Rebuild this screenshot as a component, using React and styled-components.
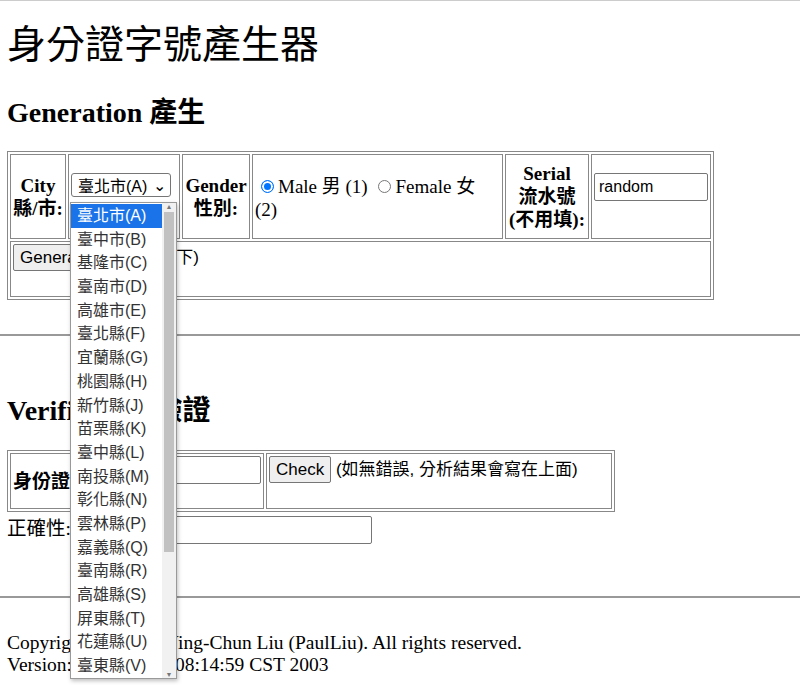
import React from "react";
import styled, { createGlobalStyle } from "styled-components";

const Global = createGlobalStyle`
  body { margin: 0; background: #fff; font-family: "Liberation Serif", "Noto Sans CJK TC", serif; font-size: 18px; color: #000; }
`;

const Page = styled.div`
  position: relative;
  border-top: 1px solid #ccc;
  padding: 0 0 0 7px;
  height: 684px;
  overflow: hidden;
`;
const Title = styled.h1`
  margin: 16px 0 0;
  font-family: "Noto Sans CJK TC", sans-serif;
  font-weight: 400;
  font-size: 39px;
  line-height: 48px;
`;
const H2 = styled.h2`
  margin: ${p => p.$top}px 0 0;
  font-size: 28px;
  line-height: 34px;
  font-family: "Liberation Serif", "Noto Sans CJK TC", serif;
`;
const Table = styled.table`
  margin-top: ${p => p.$top}px;
  border: 1px solid #888;
  border-spacing: 2px;
  width: ${p => p.$w}px;
`;
const Td = styled.td`
  border: 1px solid #888;
  padding: ${p => p.$pad || "2px"};
  vertical-align: ${p => p.$v || "middle"};
  text-align: ${p => p.$c ? "center" : "left"};
  font-weight: ${p => p.$b ? 700 : 400};
  width: ${p => p.$w ? p.$w + "px" : "auto"};
  height: ${p => p.$h ? p.$h + "px" : "auto"};
  line-height: 23px;
  font-family: ${p => p.$sans ? '"Liberation Sans", "Noto Sans CJK TC", sans-serif' : 'inherit'};
  font-size: ${p => p.$sans ? "17px" : "19px"};
`;
const FakeSelect = styled.div`
  display: inline-flex;
  align-items: center;
  gap: 6px;
  border: 1px solid #767676;
  border-radius: 3px;
  padding: 0 4px 0 6px;
  height: 22px;
  font: 16px "Liberation Sans", "Noto Sans CJK TC", sans-serif;
`;
const Radio = styled.span`
  display: inline-block;
  width: 11px;
  height: 11px;
  border-radius: 50%;
  border: 1px solid ${p => p.$on ? "#0075ff" : "#777"};
  box-shadow: ${p => p.$on ? "inset 0 0 0 2px #fff" : "none"};
  background: ${p => p.$on ? "#0075ff" : "#fff"};
  margin: 0 4px 0 6px;
`;
const Input = styled.input`
  width: ${p => p.$w}px;
  height: 24px;
  border: 1px solid #767676;
  border-radius: 2px;
  padding: 1px 4px;
  font: 16px "Liberation Sans", sans-serif;
  margin-left: ${p => p.$ml || 0}px;
`;
const Button = styled.button`
  font: 17px "Liberation Sans", "Noto Sans CJK TC", sans-serif;
  background: #efefef;
  border: 1px solid #767676;
  border-radius: 2px;
  padding: 2px 6px;
  height: 27px;
`;
const Hr = styled.hr`
  margin: ${p => p.$top}px 0 0 -7px;
  border: 0;
  border-top: 2px solid #999;
`;
const Line = styled.div`
  line-height: 22px;
  font-family: "Liberation Serif", "Noto Sans CJK TC", serif;
  font-size: ${p => p.$s || 19.5}px;
  margin-top: ${p => p.$top || 0}px;
`;
const Dropdown = styled.div`
  position: absolute;
  left: 70px;
  top: 201px;
  width: 105px;
  height: 475px;
  background: #fff;
  border: 1px solid #999;
  box-shadow: 1px 2px 4px rgba(0,0,0,0.25);
  display: flex;
  font: 16px "Liberation Sans", "Noto Sans CJK TC", sans-serif;
`;
const Options = styled.div` flex: 1; padding-top: 1px; `;
const Opt = styled.div`
  height: 23.7px;
  line-height: 23.7px;
  padding-left: 6px;
  background: ${p => p.$sel ? "#1a73e8" : "transparent"};
  color: ${p => p.$sel ? "#fff" : "#333"};
`;
const Scroll = styled.div`
  width: 14px;
  display: flex;
  flex-direction: column;
  align-items: center;
  background: #f1f1f1;
  font-size: 7px;
  color: #777;
`;
const Thumb = styled.div`
  width: 10px;
  height: 340px;
  background: #c1c1c1;
  margin: 2px 0;
`;

const cities = ["臺北市(A)","臺中市(B)","基隆市(C)","臺南市(D)","高雄市(E)","臺北縣(F)","宜蘭縣(G)","桃園縣(H)","新竹縣(J)","苗栗縣(K)","臺中縣(L)","南投縣(M)","彰化縣(N)","雲林縣(P)","嘉義縣(Q)","臺南縣(R)","高雄縣(S)","屏東縣(T)","花蓮縣(U)","臺東縣(V)"];

export default function App() {
  return (
    <Page>
      <Global />
      <Title>身分證字號產生器</Title>
      <H2 $top={31}>Generation 產生</H2>
      <Table $top={21} $w={707}>
        <tbody>
          <tr>
            <Td $b $c $w={50} $h={79}>City<br />縣/市:</Td>
            <Td $w={106} $v="top" $pad="18px 2px 2px">
              <FakeSelect>臺北市(A) <span>⌄</span></FakeSelect>
            </Td>
            <Td $b $c $w={62}>Gender<br />性別:</Td>
            <Td $v="top" $pad="20px 2px 2px">
              <Radio $on />Male 男 (1) <Radio />Female 女 (2)
            </Td>
            <Td $b $c $w={78}>Serial<br />流水號<br />(不用填):</Td>
            <Td $v="top" $w={104} $pad="18px 2px 2px"><Input $w={104} defaultValue="random" /></Td>
          </tr>
          <tr>
            <Td colSpan={6} $v="top" $h={50} $sans><Button>Generate</Button> (結果在底下)</Td>
          </tr>
        </tbody>
      </Table>
      <Hr $top={34} />
      <H2 $top={58}>Verification 驗證</H2>
      <Table $top={22} $w={608}>
        <tbody>
          <tr>
            <Td $b $w={130} $h={50}>身份證字號:</Td>
            <Td $v="top" $w={106}><Input $w={100} /></Td>
            <Td $v="top" $sans><Button>Check</Button> (如無錯誤, 分析結果會寫在上面)</Td>
          </tr>
        </tbody>
      </Table>
      <Line $top={4}>正確性: <Input $w={194} $ml={92} /></Line>
      <Hr $top={52} />
      <Line $top={34}>Copyright (C) 2003 Ying-Chun Liu (PaulLiu). All rights reserved.</Line>
      <Line>Version: Sun Nov 30 08:14:59 CST 2003</Line>
      <Dropdown>
        <Options>
          {cities.map((c, i) => <Opt key={c} $sel={i === 0}>{c}</Opt>)}
        </Options>
        <Scroll>▲<Thumb /><div style={{ flex: 1 }} />▼</Scroll>
      </Dropdown>
    </Page>
  );
}
